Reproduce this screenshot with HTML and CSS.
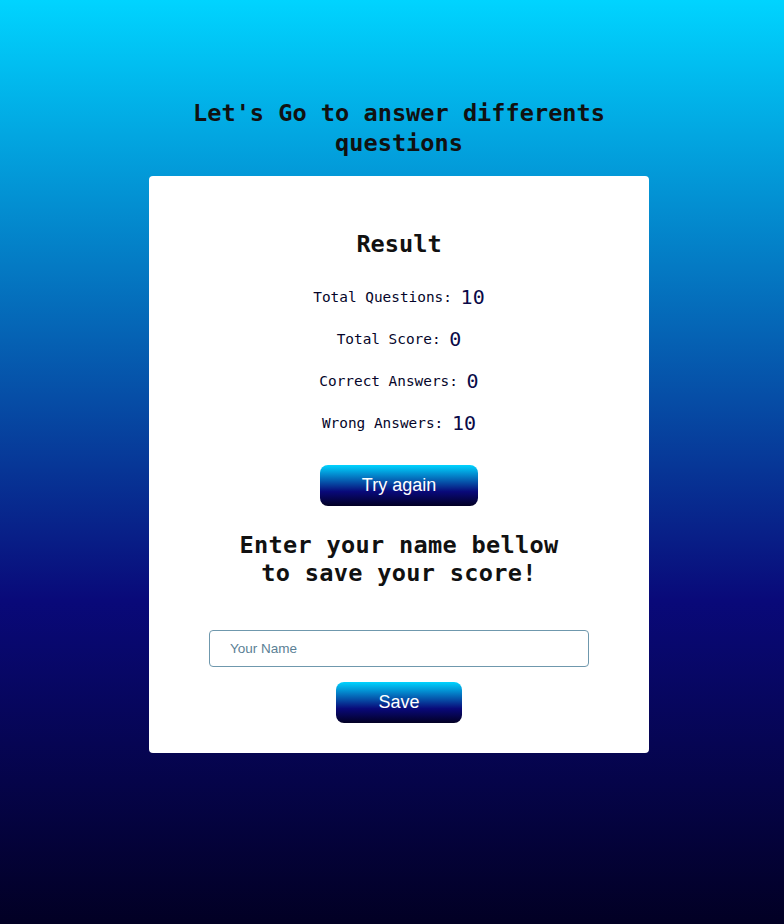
FILE: index.html
```html
<!DOCTYPE html>
<html lang="en">
<head>
<meta charset="utf-8">
<title>Quiz Result</title>
<link rel="stylesheet" href="styles.css">
</head>
<body>
<main class="page">
  <h1 class="title">Let's Go to answer differents questions</h1>
  <section class="card">
    <h2 class="result-title">Result</h2>
    <div class="stats">
      <p class="stat">Total Questions: <span class="num">10</span></p>
      <p class="stat">Total Score: <span class="num">0</span></p>
      <p class="stat">Correct Answers: <span class="num">0</span></p>
      <p class="stat">Wrong Answers: <span class="num">10</span></p>
    </div>
    <button class="btn btn-try">Try again</button>
    <h3 class="save-title">Enter your name bellow<br>to save your score!</h3>
    <input class="name-input" type="text" placeholder="Your Name">
    <button class="btn btn-save">Save</button>
  </section>
</main>
</body>
</html>
```
FILE: styles.css
```css
html, body {
  margin: 0;
  padding: 0;
  height: 100%;
}
body {
  background: linear-gradient(0deg, #020024 0%, #090979 35%, #00d4ff 100%);
  font-family: "DejaVu Sans Mono", "Liberation Mono", monospace;
  color: #111;
}
.page {
  display: flex;
  flex-direction: column;
  align-items: center;
  padding: 98px 0 0 14px;
  box-sizing: border-box;
  min-height: 100%;
}
.title {
  margin: 0;
  width: 440px;
  text-align: center;
  font-size: 23.6px;
  line-height: 30px;
  font-weight: bold;
  color: #111;
}
.card {
  margin-top: 18px;
  width: 500px;
  box-sizing: border-box;
  background: #fff;
  border-radius: 4px;
  display: flex;
  flex-direction: column;
  align-items: center;
  padding: 53px 0 30px;
}
.result-title {
  margin: 0;
  font-size: 23.6px;
  line-height: 30px;
  font-weight: bold;
  color: #111;
}
.stats {
  margin-top: 26px;
  display: flex;
  flex-direction: column;
  align-items: center;
  gap: 18px;
}
.stat {
  margin: 0;
  height: 24px;
  display: flex;
  align-items: center;
  font-size: 14.4px;
  color: #05052a;
  white-space: pre;
}
.num {
  font-size: 20px;
  color: #0a0a48;
}
.btn {
  border: none;
  border-radius: 8px;
  height: 41px;
  background: linear-gradient(0deg, #020024 0%, #090979 35%, #00d4ff 100%);
  color: #fff;
  font-family: "Liberation Sans", Arial, sans-serif;
  font-size: 18px;
  padding: 0;
  cursor: pointer;
}
.btn-try {
  margin-top: 30px;
  width: 158px;
}
.save-title {
  margin: 25px 0 0;
  text-align: center;
  font-size: 23.6px;
  line-height: 28px;
  letter-spacing: 0.3px;
  font-weight: bold;
  color: #111;
}
.name-input {
  margin-top: 43px;
  width: 380px;
  height: 37px;
  box-sizing: border-box;
  border: 1px solid #6f98ad;
  border-radius: 4px;
  padding: 0 0 0 20px;
  font-family: "Liberation Sans", Arial, sans-serif;
  font-size: 13.5px;
  outline: none;
}
.name-input::placeholder {
  color: #5b7f95;
}
.btn-save {
  margin-top: 15px;
  width: 126px;
}
```
